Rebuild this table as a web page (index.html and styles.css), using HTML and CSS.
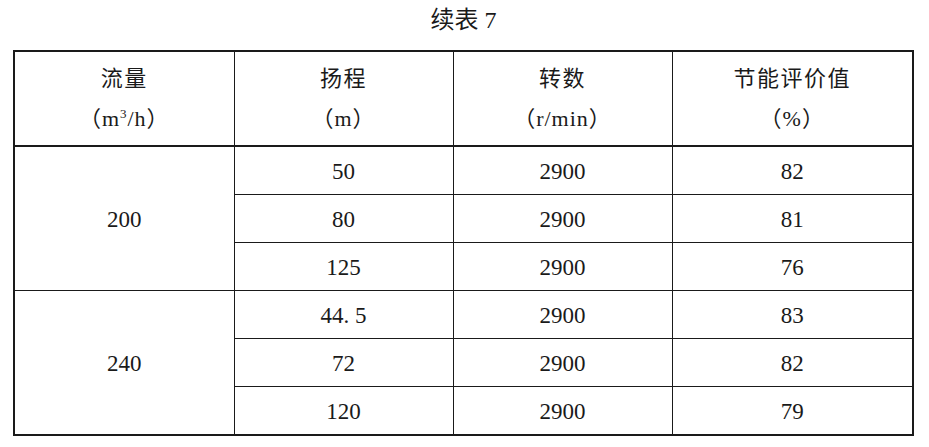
FILE: index.html
```html
<!DOCTYPE html>
<html lang="zh">
<head>
<meta charset="utf-8">
<link rel="stylesheet" href="styles.css">
</head>
<body>
<div class="page">
  <div class="title">续表 7</div>
  <table class="data">
    <colgroup>
      <col class="c1"><col class="c2"><col class="c3"><col class="c4">
    </colgroup>
    <thead>
      <tr class="head">
        <th><div class="h1">流量</div><div class="h2">（m<sup>3</sup>/h）</div></th>
        <th><div class="h1">扬程</div><div class="h2">（m）</div></th>
        <th><div class="h1">转数</div><div class="h2">（r/min）</div></th>
        <th><div class="h1">节能评价值</div><div class="h2">（%）</div></th>
      </tr>
    </thead>
    <tbody>
      <tr class="r"><td rowspan="3">200</td><td>50</td><td>2900</td><td>82</td></tr>
      <tr class="r"><td>80</td><td>2900</td><td>81</td></tr>
      <tr class="r"><td>125</td><td>2900</td><td>76</td></tr>
      <tr class="r"><td rowspan="3">240</td><td>44. 5</td><td>2900</td><td>83</td></tr>
      <tr class="r"><td>72</td><td>2900</td><td>82</td></tr>
      <tr class="r"><td>120</td><td>2900</td><td>79</td></tr>
    </tbody>
  </table>
</div>
</body>
</html>
```

FILE: styles.css
```css
html, body {
  margin: 0;
  padding: 0;
  background: #ffffff;
}
body {
  font-family: "Liberation Serif", "Noto Sans CJK SC", serif;
  color: #1a1a1a;
}
.page {
  padding-left: 13px;
  width: 900px;
}
.title {
  height: 50px;
  box-sizing: border-box;
  padding-top: 5px;
  text-align: center;
  font-size: 24px;
  line-height: 30px;
  padding-left: 1px;
}
.data {
  width: 899px;
  table-layout: fixed;
  border-collapse: collapse;
  border: 2px solid #1a1a1a;
}
.c1 { width: 220px; }
.c2 { width: 219px; }
.c3 { width: 219px; }
.c4 { width: 241px; }
.data th, .data td {
  border: 1.5px solid #1a1a1a;
  text-align: center;
  vertical-align: middle;
  padding: 0;
  font-size: 23px;
  font-weight: normal;
}
.head th {
  height: 93px;
  border-bottom-width: 2px;
}
.h1 {
  font-size: 22px;
  line-height: 30px;
  letter-spacing: 1.5px;
}
.h2 {
  font-size: 22px;
  line-height: 30px;
  margin-top: 10px;
  letter-spacing: 1px;
}
.h2 sup {
  font-size: 13px;
  vertical-align: 8px;
  line-height: 0;
}
.r td {
  height: 45px;
  line-height: 24px;
  padding-top: 2px;
}
```
